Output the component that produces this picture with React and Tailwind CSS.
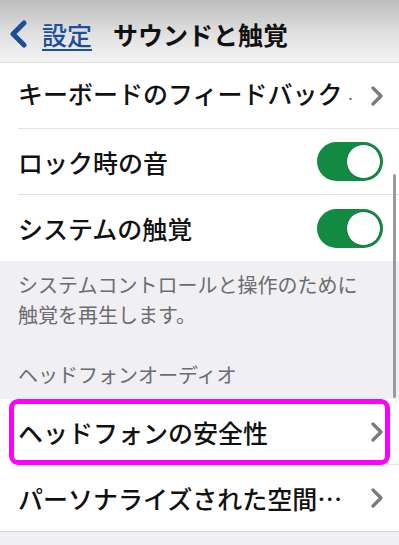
import React from "react";

const Chevron = () => (
  <svg width="12" height="20" viewBox="0 0 12 20" className="shrink-0">
    <polyline points="2,2 10,10 2,18" fill="none" stroke="#7a7a7a" strokeWidth="3.2" strokeLinecap="round" strokeLinejoin="round" />
  </svg>
);

const Toggle = () => (
  <div className="w-[66px] h-[39px] rounded-full bg-[#128a42] flex items-center justify-end pr-[2px] shrink-0">
    <div className="w-[35px] h-[35px] rounded-full bg-white border border-[#0d6e33]" />
  </div>
);

const Row = ({ label, right, last }) => (
  <div className="h-[66px] flex items-center pl-[18px]">
    <div className={`flex-1 h-full flex items-center pr-[16px] ${last ? "" : "border-b border-[#e2e2e2]"}`}>
      <span className="flex-1 text-[25px] font-medium text-[#111] leading-[34px] whitespace-nowrap">{label}</span>
      {right}
    </div>
  </div>
);

export default function App() {
  return (
    <div
      className="relative w-[399px] h-[545px] overflow-hidden bg-[#efeff4]"
      style={{ fontFamily: '"Noto Sans CJK JP", "Noto Sans", sans-serif' }}
    >
      {/* Nav bar */}
      <div className="h-[63px] flex items-center pl-[9px] pt-[6px] bg-gradient-to-b from-[#bcbcbc] via-[#dedede] to-[#f4f4f4] border-b border-[#dcdcdc]">
        <svg width="19" height="28" viewBox="0 0 19 28">
          <polyline points="15,3 4,14 15,25" fill="none" stroke="#1c4e9b" strokeWidth="5" strokeLinecap="round" strokeLinejoin="round" />
        </svg>
        <span className="ml-[14px] text-[25px] font-medium text-[#1c4e9b] underline underline-offset-[4px] decoration-[2px] leading-[34px]">設定</span>
        <span className="ml-[21px] text-[25px] font-bold text-[#111] leading-[34px]">サウンドと触覚</span>
      </div>

      {/* First group */}
      <div className="bg-white">
        <Row
          label={<>キーボードのフィードバック<span className="text-[#666] text-[14px] ml-[4px] align-middle">·</span></>}
          right={<Chevron />}
        />
        <Row label="ロック時の音" right={<Toggle />} />
        <Row label="システムの触覚" right={<Toggle />} last />
      </div>

      {/* Footer and section header */}
      <div className="px-[18px] pt-[9px] text-[20px] leading-[30px] text-[#6b6b70]">
        システムコントロールと操作のために
        <br />
        触覚を再生します。
      </div>
      <div className="px-[18px] pt-[30px] pb-[9px] text-[20px] leading-[30px] text-[#6b6b70]">ヘッドフォンオーディオ</div>

      {/* Second group */}
      <div className="bg-white border-b border-[#d8d8d8]">
        <div className="relative">
          <Row label="ヘッドフォンの安全性" right={<Chevron />} />
          <div className="absolute left-[9px] right-[9px] top-0 bottom-0 border-[5px] border-[#ff00ff] rounded-[9px]" />
        </div>
        <Row label="パーソナライズされた空間…" right={<Chevron />} last />
      </div>

      {/* scroll indicator */}
      <div className="absolute right-[3px] top-[174px] w-[3px] h-[224px] rounded-full bg-[#9a9a9a]" />
    </div>
  );
}
